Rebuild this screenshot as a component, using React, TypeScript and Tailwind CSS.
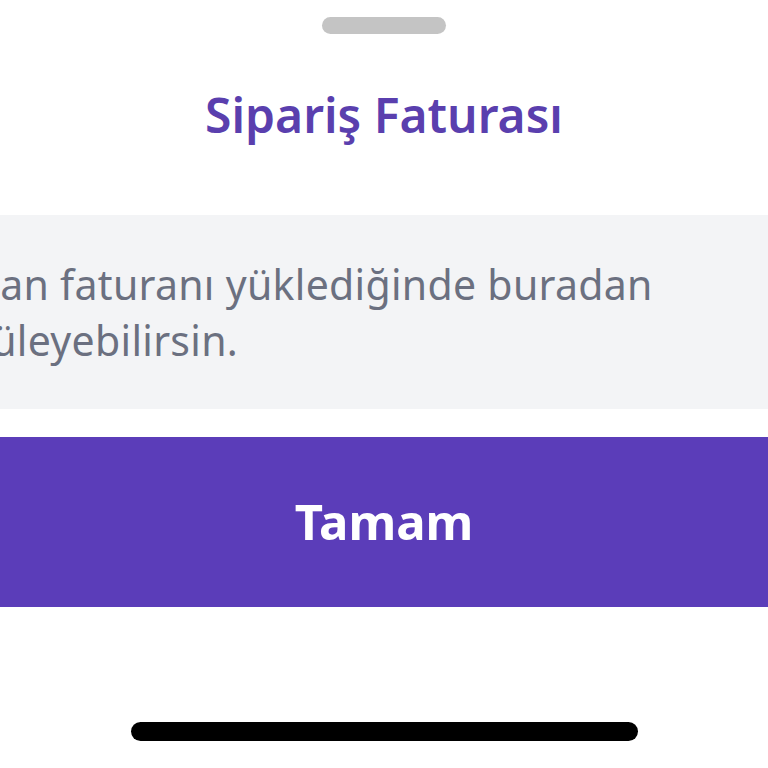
export default function App() {
  return (
    <div
      className="flex h-[768px] w-full flex-col overflow-hidden bg-white"
      style={{ fontFamily: '"Noto Sans", "Open Sans", sans-serif' }}
    >
      {/* sheet handle */}
      <div className="flex justify-center pt-[17px]">
        <div className="h-[17px] w-[124px] rounded-full bg-[#c4c4c4]" />
      </div>

      <h1 className="mt-[51px] text-center text-[48px] font-semibold leading-[60px] text-[#5a3fae]">
        Sipariş Faturası
      </h1>

      {/* info box, wider than the visible screen */}
      <div className="mt-[70px] -ml-[164px] -mr-[150px] bg-[#f3f4f6] px-[21px] py-[41px]">
        <p className="indent-[14px] text-[41px] leading-[56px] tracking-[0.3px] text-[#6b7080]">
          Mağazan faturanı yüklediğinde buradan görüntüleyebilirsin.
        </p>
      </div>

      <button className="mt-[28px] flex h-[170px] w-full items-center justify-center bg-[#5b3db9] text-[49px] font-bold text-white">
        Tamam
      </button>

      <div className="mt-auto flex justify-center pb-[27px]">
        <div className="h-[19px] w-[507px] rounded-full bg-black" />
      </div>
    </div>
  );
}
